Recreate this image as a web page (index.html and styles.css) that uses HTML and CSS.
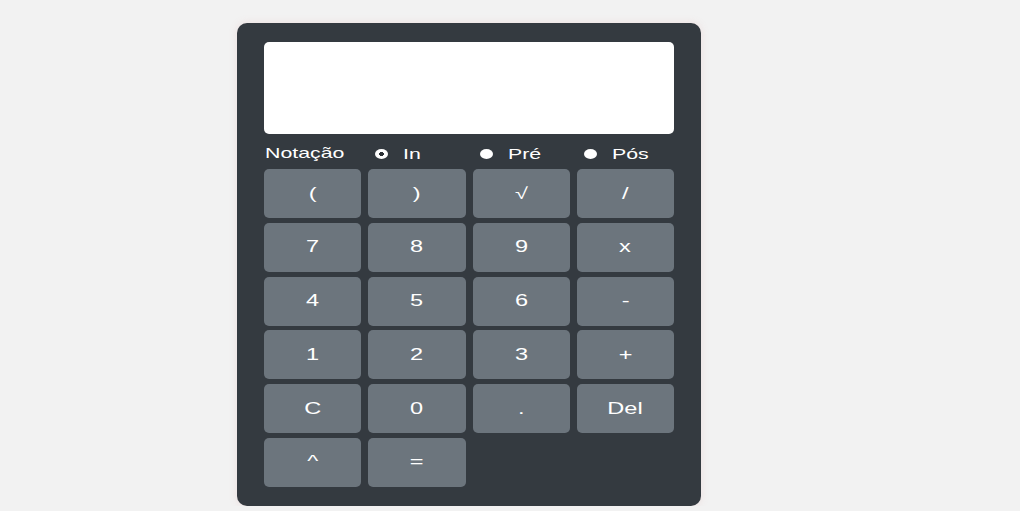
FILE: index.html
```html
<!DOCTYPE html>
<html lang="pt">
<head>
<meta charset="utf-8">
<title>Calculadora</title>
<link rel="stylesheet" href="styles.css">
</head>
<body>
<div class="page">
  <div class="calc">
    <div class="display"></div>
    <div class="notation">
      <span class="label"><span class="wide left">Notação</span></span>
      <label class="opt"><input type="radio" name="n" class="radio" checked><span class="wide left">In</span></label>
      <label class="opt"><input type="radio" name="n" class="radio"><span class="wide left">Pré</span></label>
      <label class="opt"><input type="radio" name="n" class="radio"><span class="wide left">Pós</span></label>
    </div>
    <div class="keys">
      <button class="key"><span class="wide">(</span></button>
      <button class="key"><span class="wide">)</span></button>
      <button class="key"><span class="wide">√</span></button>
      <button class="key"><span class="wide">/</span></button>
      <button class="key"><span class="wide">7</span></button>
      <button class="key"><span class="wide">8</span></button>
      <button class="key"><span class="wide">9</span></button>
      <button class="key"><span class="wide">x</span></button>
      <button class="key"><span class="wide">4</span></button>
      <button class="key"><span class="wide">5</span></button>
      <button class="key"><span class="wide">6</span></button>
      <button class="key"><span class="wide">-</span></button>
      <button class="key"><span class="wide">1</span></button>
      <button class="key"><span class="wide">2</span></button>
      <button class="key"><span class="wide">3</span></button>
      <button class="key"><span class="wide">+</span></button>
      <button class="key"><span class="wide">C</span></button>
      <button class="key"><span class="wide">0</span></button>
      <button class="key"><span class="wide">.</span></button>
      <button class="key"><span class="wide">Del</span></button>
      <button class="key"><span class="wide">^</span></button>
      <button class="key"><span class="wide">=</span></button>
    </div>
  </div>
</div>
</body>
</html>
```
FILE: styles.css
```css
html, body {
  margin: 0;
  padding: 0;
  background: #f2f2f2;
  font-family: "Liberation Sans", Arial, sans-serif;
}
.page {
  padding: 23px 0 0 237px;
}
.calc {
  width: 464px;
  box-sizing: border-box;
  padding: 19px 27px 19px 27px;
  background: #343a40;
  border-radius: 10px;
  box-shadow: 0 0 8px rgba(220, 140, 140, 0.18);
}
.display {
  height: 92px;
  background: #ffffff;
  border-radius: 5px;
}
.notation {
  height: 35px;
  display: grid;
  grid-template-columns: repeat(4, 1fr);
  column-gap: 7px;
  align-items: center;
  color: #ffffff;
  font-size: 14.5px;
}
.label {
  padding-left: 1px;
  margin-top: 3px;
}
.opt {
  display: flex;
  align-items: center;
  margin-top: 4px;
}
.radio {
  appearance: none;
  -webkit-appearance: none;
  width: 13px;
  height: 10px;
  margin: 0 15px 0 7px;
  border-radius: 50%;
  background: #ffffff;
}
.radio:checked {
  background: radial-gradient(ellipse 2.6px 2px at center, #2b3035 90%, #ffffff 100%);
}
.opt .wide {
  margin-top: 1px;
}
.wide {
  display: inline-block;
  transform: scaleX(1.47);
}
.wide.left {
  transform-origin: left center;
}
.keys {
  display: grid;
  grid-template-columns: repeat(4, 1fr);
  grid-auto-rows: 49px;
  column-gap: 7px;
  row-gap: 4.8px;
}
.key {
  border: none;
  margin: 0;
  padding: 0;
  background: #6c757d;
  color: #ffffff;
  border-radius: 5px;
  font-family: "Liberation Sans", Arial, sans-serif;
  font-size: 16px;
  display: flex;
  align-items: center;
  justify-content: center;
}
```
